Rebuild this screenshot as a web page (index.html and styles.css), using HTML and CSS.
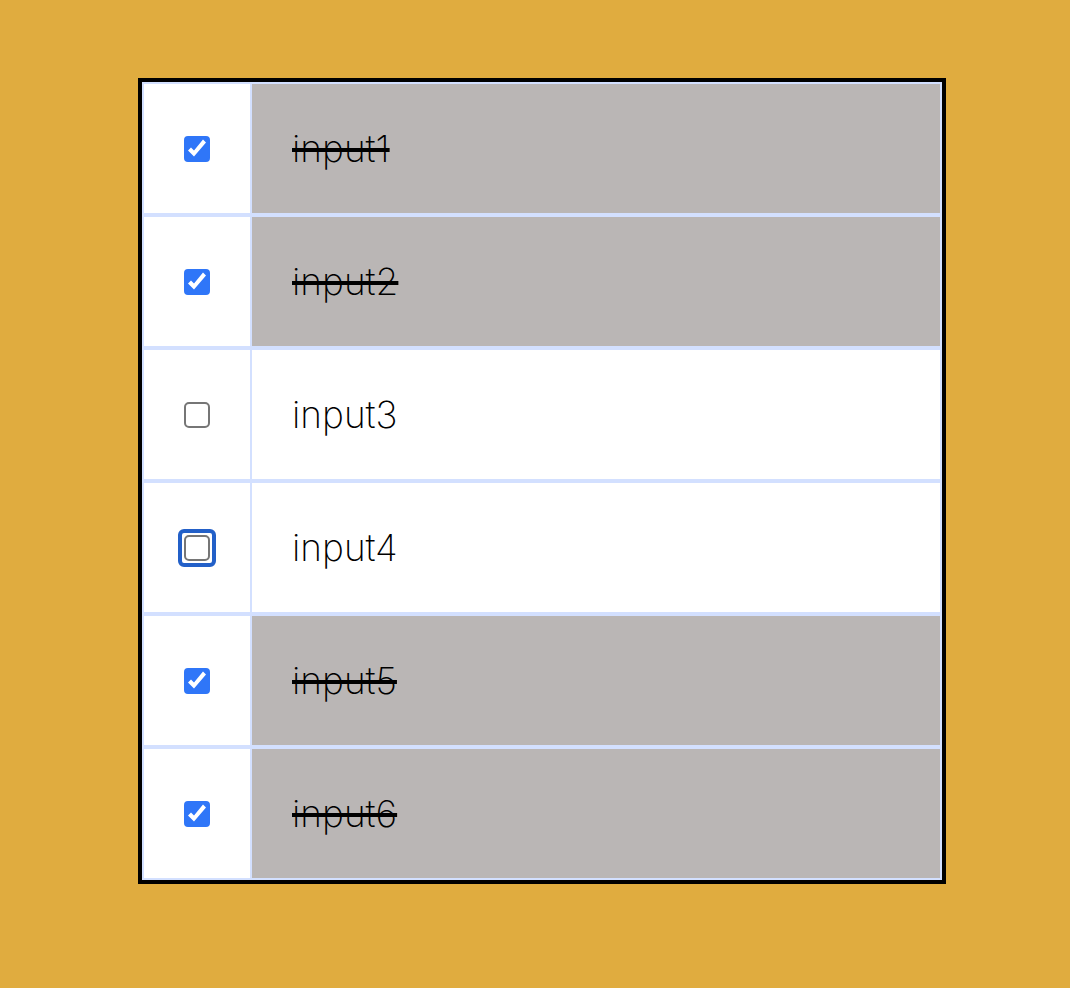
FILE: index.html
```html
<!DOCTYPE html>
<html lang="en">
<head>
  <meta charset="utf-8">
  <meta name="viewport" content="width=device-width, initial-scale=1">
  <title>Checklist</title>
  <link rel="stylesheet" href="styles.css">
</head>
<body class="page">
  <main class="inbox">
    <div class="item">
      <input class="check" type="checkbox" id="item1" checked>
      <label class="item-label" for="item1">input1</label>
    </div>
    <div class="item">
      <input class="check" type="checkbox" id="item2" checked>
      <label class="item-label" for="item2">input2</label>
    </div>
    <div class="item">
      <input class="check" type="checkbox" id="item3">
      <label class="item-label" for="item3">input3</label>
    </div>
    <div class="item">
      <input class="check is-focused" type="checkbox" id="item4">
      <label class="item-label" for="item4">input4</label>
    </div>
    <div class="item">
      <input class="check" type="checkbox" id="item5" checked>
      <label class="item-label" for="item5">input5</label>
    </div>
    <div class="item">
      <input class="check" type="checkbox" id="item6" checked>
      <label class="item-label" for="item6">input6</label>
    </div>
  </main>
</body>
</html>
```
FILE: styles.css
```css
* {
  box-sizing: border-box;
}

.page {
  margin: 0;
  padding: 78px 124px 78px 138px;
  background: #e0ac3f;
  color: #000;
  font-family: Inter, "Helvetica Neue", "Liberation Sans", sans-serif;
  font-weight: 200;
}

.inbox {
  border: 4px solid #000;
  background: #fff;
}

.item {
  display: flex;
  align-items: center;
  border: 2px solid #d3e0ff;
}

.check {
  position: relative;
  flex: none;
  appearance: none;
  width: 26px;
  height: 26px;
  margin: 0 40px;
  border: 2px solid #767676;
  border-radius: 5px;
  outline: none;
  background: #fff;
}

.check:checked {
  border-color: #2f76f8;
  border-radius: 4px;
  background: #2f76f8;
}

.check:checked::before {
  content: "";
  display: block;
  width: 22px;
  height: 22px;
  background: #fff;
  clip-path: polygon(2px 13px, 5px 10px, 8px 13px, 17px 2px, 20px 5px, 8px 19px);
}

/* Focus ring around the box */
.check:focus-visible::after,
.check.is-focused::after {
  content: "";
  position: absolute;
  inset: -8px;
  border: 4px solid #2360c8;
  border-radius: 6px;
}

.item-label {
  flex: 1;
  padding: 40px;
  border-left: 2px solid #d3e0ff;
  font-size: 37px;
  line-height: 49px;
}

.check:checked + .item-label {
  background: #bab6b5;
  text-decoration: line-through;
  text-decoration-thickness: 4px;
}
```
